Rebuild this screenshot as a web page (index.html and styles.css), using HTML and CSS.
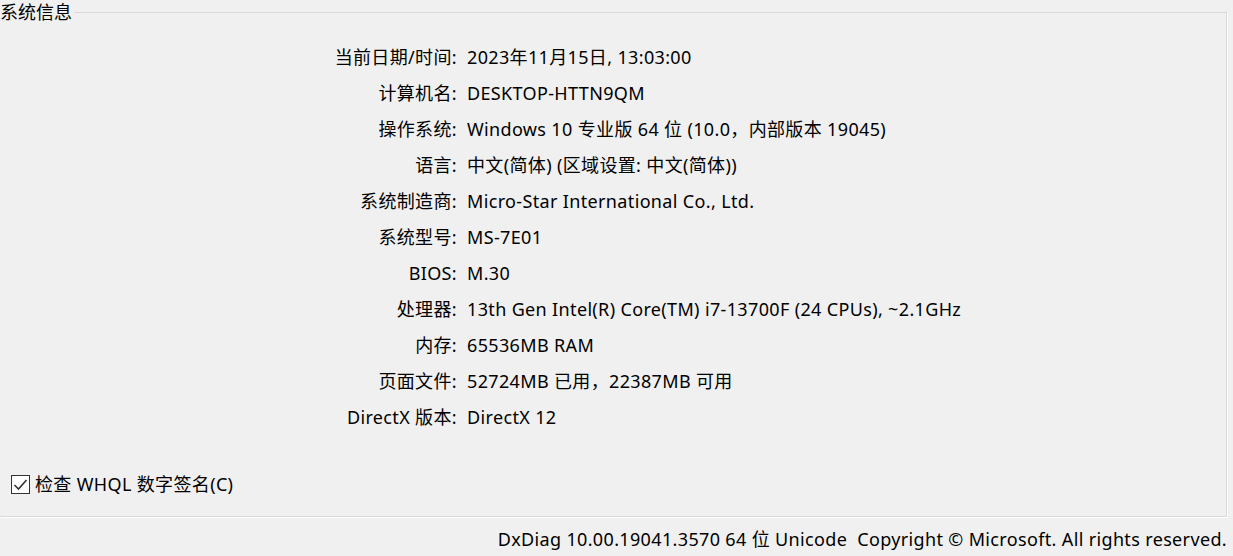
FILE: index.html
```html
<!DOCTYPE html>
<html lang="zh-CN">
<head>
    <meta charset="UTF-8">
    <title>DirectX 诊断工具 - 系统</title>
    <link rel="stylesheet" href="styles.css">
</head>
<body>
    <div class="group">
        <div class="group-title">系统信息</div>
        <div class="info">
            <div class="label">当前日期/时间:</div><div class="value">2023年11月15日, 13:03:00</div>
            <div class="label">计算机名:</div><div class="value">DESKTOP-HTTN9QM</div>
            <div class="label">操作系统:</div><div class="value">Windows 10 专业版 64 位 (10.0，内部版本 19045)</div>
            <div class="label">语言:</div><div class="value">中文(简体) (区域设置: 中文(简体))</div>
            <div class="label">系统制造商:</div><div class="value">Micro-Star International Co., Ltd.</div>
            <div class="label">系统型号:</div><div class="value">MS-7E01</div>
            <div class="label">BIOS:</div><div class="value">M.30</div>
            <div class="label">处理器:</div><div class="value">13th Gen Intel(R) Core(TM) i7-13700F (24 CPUs), ~2.1GHz</div>
            <div class="label">内存:</div><div class="value">65536MB RAM</div>
            <div class="label">页面文件:</div><div class="value">52724MB 已用，22387MB 可用</div>
            <div class="label">DirectX 版本:</div><div class="value">DirectX 12</div>
        </div>
        <label class="check">
            <span class="box">
                <svg width="17" height="17" viewBox="0 0 17 17"><path d="M2.5 9 L6.5 13 L14.5 4" fill="none" stroke="#333" stroke-width="1.6"/></svg>
            </span>
            检查 WHQL 数字签名(C)
        </label>
    </div>
    <div class="footer">DxDiag 10.00.19041.3570 64 位 Unicode&nbsp; Copyright © Microsoft. All rights reserved.</div>
</body>
</html>
```

FILE: styles.css
```css
body {
    margin: 0;
    background: #f0f0f0;
    color: #000;
    font-family: "Noto Sans", "Noto Sans CJK SC", sans-serif;
    font-size: 18px;
    letter-spacing: 0.35px;
    overflow: hidden;
}
.group {
    position: relative;
    margin-top: 12px;
    width: 1227px;
    height: 505px;
    border-top: 1px solid #d9d9d9;
    border-right: 1px solid #d9d9d9;
    border-bottom: 1px solid #d9d9d9;
    box-shadow: 1px 1px 0 #fff;
    box-sizing: border-box;
    padding-top: 26px;
}
.group-title {
    position: absolute;
    left: 0;
    top: -14px;
    line-height: 26px;
    padding-right: 2px;
    background: #f0f0f0;
    letter-spacing: 0;
}
.info {
    display: grid;
    grid-template-columns: 457px auto;
    column-gap: 10px;
    grid-auto-rows: 36px;
    line-height: 36px;
}
.label {
    text-align: right;
}
.check {
    display: flex;
    align-items: center;
    gap: 5px;
    margin-top: 36px;
    padding-left: 11px;
    line-height: 26px;
}
.box {
    width: 17px;
    height: 17px;
    border: 1px solid #333;
    background: #fff;
    display: flex;
}
.footer {
    text-align: right;
    padding-top: 3px;
    padding-right: 6px;
    line-height: 38px;
}
```
